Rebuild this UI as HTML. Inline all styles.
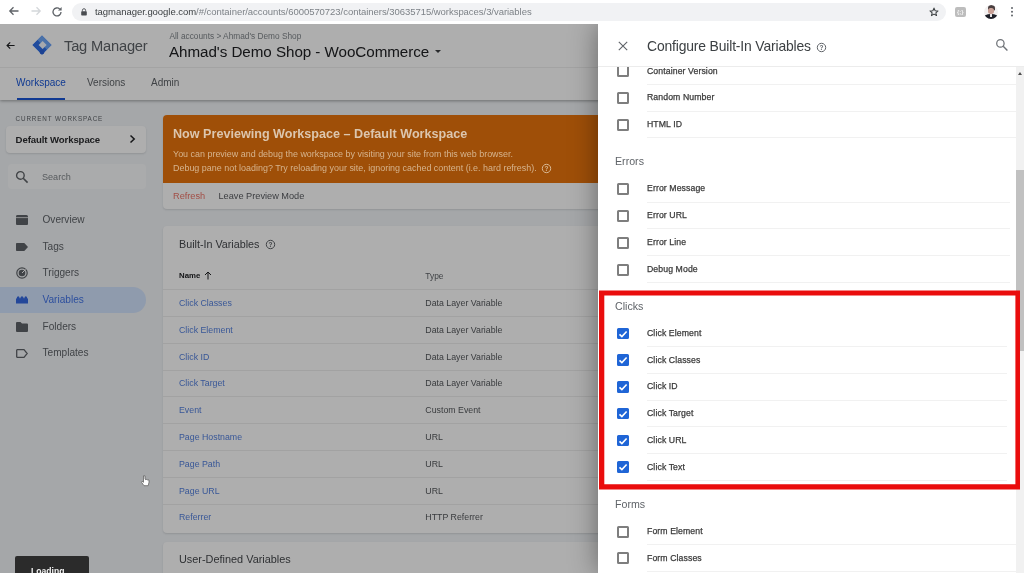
<!DOCTYPE html>
<html lang="en">
<head>
<meta charset="utf-8">
<title>Tag Manager</title>
<style>
*{box-sizing:border-box;margin:0;padding:0}
html,body{width:1024px;height:573px;overflow:hidden;background:#fff}
body{font-family:"Liberation Sans",sans-serif;position:relative;color:#202124}
.abs{position:absolute}
.t{position:absolute;white-space:nowrap;line-height:1;filter:blur(.4px)}
svg{filter:blur(.3px)}
/* browser chrome */
#chrome{position:absolute;left:0;top:0;width:1024px;height:24px;background:#fff;z-index:50}
#pill{position:absolute;left:72px;top:2.5px;width:874px;height:18px;border-radius:9px;background:#f1f2f4}
#url{left:95px;top:7.4px;font-size:9.5px;color:#7d8287;letter-spacing:-0.04px}
#url b{font-weight:normal;color:#3c4043}
/* app (dimmed) */
#app{position:absolute;left:0;top:24px;width:1024px;height:549px;background:#f2f5f8;overflow:hidden}
#hdr{position:absolute;left:0;top:0;width:1024px;height:75.5px;background:#fff;box-shadow:0 1px 3px rgba(0,0,0,.35)}
#dim{position:absolute;left:0;top:24px;width:598px;height:549px;background:rgba(0,0,0,.316);z-index:20}
.card{position:absolute;background:#fff;border-radius:4px;box-shadow:0 1px 2px rgba(60,64,67,.16)}
.nav{left:42.5px;font-size:10.1px;color:#5f6368}
.row{position:absolute;left:163px;width:500px;height:1px;background:#ededed}
.lnk{left:179px;font-size:8.8px;color:#5581de}
.typ{left:425.3px;font-size:8.8px;color:#55585c}
/* panel */
#panel{position:absolute;left:598px;top:24px;width:426px;height:549px;background:#fff;z-index:30;overflow:hidden}
#pshadow{position:absolute;left:598px;top:24px;width:426px;height:549px;box-shadow:0 0 26px rgba(0,0,0,.42);z-index:29}
.cb{position:absolute;left:19px;width:12px;height:12px;border:2px solid #7e7e7e;border-radius:1.5px;background:#fff;filter:blur(.3px)}
.cb.on{border-color:#1f65d6;background:#1f65d6;width:11.5px;height:11.5px}
.cb.on svg{position:absolute;left:-2px;top:-2px}
.lab{left:49px;font-size:8.7px;color:#3a3a3a;letter-spacing:.1px;-webkit-text-stroke:.25px #3a3a3a}
.sec{left:17px;font-size:10.65px;color:#5f6368}
.sep{position:absolute;left:49px;width:361px;height:1px;background:#f1f1f1}
#red{position:absolute;left:0;top:0;z-index:40;filter:none}
</style>
</head>
<body>

<!-- ===== Browser chrome ===== -->
<div id="chrome">
  <svg class="abs" style="left:8px;top:5px" width="12" height="12" viewBox="0 0 12 12"><path d="M10.5 6H2M5.5 2.2 1.8 6l3.7 3.8" fill="none" stroke="#5f6368" stroke-width="1.3"/></svg>
  <svg class="abs" style="left:30px;top:5px" width="12" height="12" viewBox="0 0 12 12"><path d="M1.5 6H10M6.5 2.2 10.2 6 6.5 9.8" fill="none" stroke="#d4d7da" stroke-width="1.3"/></svg>
  <svg class="abs" style="left:51px;top:5.5px" width="12" height="12" viewBox="0 0 12 12"><path d="M10 6a4 4 0 1 1-1.3-3" fill="none" stroke="#5f6368" stroke-width="1.3"/><path d="M10.6 1v3.6H7z" fill="#5f6368"/></svg>
  <div id="pill"></div>
  <svg class="abs" style="left:80.500px;top:8px" width="6" height="8" viewBox="0 0 6 8"><rect x="0.2" y="3.2" width="5.600" height="4.300" rx=".7" fill="#4a4d51"/><path d="M1.400 3.500V2.300a1.600 1.600 0 0 1 3.200 0V3.500" fill="none" stroke="#4a4d51" stroke-width=".9"/></svg>
  <div id="url" class="t"><b>tagmanager.google.com</b>/#/container/accounts/6000570723/containers/30635715/workspaces/3/variables</div>
  <svg class="abs" style="left:928.500px;top:7px" width="10" height="10" viewBox="0 0 13 12.500"><path d="M6.500 1.200 8 4.600l3.700.3-2.800 2.400.9 3.600L6.500 9 3.200 10.900l.9-3.600L1.300 4.900 5 4.600z" fill="none" stroke="#3c4043" stroke-width="1.400" stroke-linejoin="round"/></svg>
  <div class="abs" style="left:955px;top:7px;width:11px;height:10px;border-radius:2px;background:#bdbdbd"></div>
  <div class="t" style="left:957px;top:9px;font-size:6px;color:#f4f4f4;font-weight:bold">{;}</div>
  <div class="abs" style="left:984px;top:5px;width:14px;height:14px;border-radius:50%;background:#f3f1f1;overflow:hidden;filter:blur(.4px)">
    <div class="abs" style="left:3.500px;top:-.5px;width:7px;height:6px;border-radius:50% 50% 30% 30%;background:#4a3f40"></div>
    <div class="abs" style="left:4.300px;top:2.800px;width:5.400px;height:6.200px;border-radius:45%;background:#c9a197"></div>
    <div class="abs" style="left:-1px;top:8.600px;width:16px;height:9px;border-radius:50% 50% 0 0;background:#1d1f27"></div>
    <div class="abs" style="left:6.200px;top:8.600px;width:1.600px;height:3px;background:#e8e6e8"></div>
  </div>
  <div class="abs" style="left:1011px;top:6.900px;width:2px;height:2px;border-radius:50%;background:#5f6368;box-shadow:0 3.700px 0 #5f6368,0 7.400px 0 #5f6368"></div>
</div>

<!-- ===== Tag Manager app (behind overlay) ===== -->
<div id="app">
  <div id="hdr">
    <svg class="abs" style="left:6px;top:17px" width="9" height="9" viewBox="0 0 9 9"><path d="M8.600 4.500H1.400M4.200 1.400 1.100 4.500l3.100 3.100" fill="none" stroke="#202124" stroke-width="1.200"/></svg>
    <svg class="abs" style="left:32px;top:11px" width="20" height="20" viewBox="0 0 20 20">
      <path d="M10 .5 19.500 10 10 19.500 .5 10z" fill="#4d8ff8"/>
      <path d="M10 .5 19.500 10 15 14.500 5.500 5z" fill="#6da6f6"/>
      <path d="M5.500 5 .5 10 10 19.500 14.800 14.700 10 10z" fill="#2f6fe6"/>
      <circle cx="10" cy="17" r="2.400" fill="#2a62d8"/>
      <path d="M10.600 6 14.600 10 10.600 14 6.600 10z" fill="#f3f8ff"/>
    </svg>
    <div class="t" style="left:64px;top:14.5px;font-size:14.7px;color:#5f6368;letter-spacing:-.2px">Tag Manager</div>
    <div class="t" style="left:169.4px;top:8.3px;font-size:8.3px;color:#80868b">All accounts &gt; Ahmad's Demo Shop</div>
    <div class="t" style="left:169px;top:20px;font-size:15.2px;color:#202124;letter-spacing:-.05px">Ahmad's Demo Shop - WooCommerce</div>
    <div class="abs" style="left:435px;top:25.5px;width:0;height:0;border:3px solid transparent;border-top:3.5px solid #3c4043"></div>
    <div class="abs" style="left:0;top:43px;width:1024px;height:1px;background:#efefef"></div>
    <!-- tabs -->
    <div class="t" style="left:16px;top:54.4px;font-size:10px;color:#1a56d6">Workspace</div>
    <div class="t" style="left:87px;top:54.4px;font-size:10px;color:#5f6368">Versions</div>
    <div class="t" style="left:151px;top:54.4px;font-size:10px;color:#5f6368">Admin</div>
    <div class="abs" style="left:17px;top:73.5px;width:48px;height:2.2px;background:#1a56d6"></div>
  </div>

  <!-- sidebar -->
  <div class="t" style="left:15.6px;top:91.5px;font-size:6.3px;color:#5f6368;letter-spacing:.86px">CURRENT WORKSPACE</div>
  <div class="card" style="left:6px;top:102px;width:140px;height:27px;background:#fff"></div>
  <div class="t" style="left:15.6px;top:110.5px;font-size:9.6px;color:#2b2c2f;font-weight:bold;letter-spacing:-.1px">Default Workspace</div>
  <svg class="abs" style="left:129px;top:110px" width="7" height="10" viewBox="0 0 7 10"><path d="M1.5 1.5 5.2 5 1.5 8.5" fill="none" stroke="#202124" stroke-width="1.5"/></svg>
  <div class="abs" style="left:8px;top:140px;width:138px;height:25px;border-radius:4px;background:#fafbfc"></div>
  <svg class="abs" style="left:15px;top:146px" width="14" height="14" viewBox="0 0 14 14"><circle cx="5.4" cy="5.4" r="3.8" fill="none" stroke="#5f6368" stroke-width="1.4"/><path d="M8.2 8.2 12.6 12.6" stroke="#5f6368" stroke-width="1.6"/></svg>
  <div class="t" style="left:42px;top:148.500px;font-size:9.1px;color:#80868b">Search</div>

  <!-- nav icons -->
  <svg class="abs" style="left:16px;top:190.900px" width="12" height="10" viewBox="0 0 12 10"><path d="M0 1.5A1.5 1.5 0 0 1 1.5 0h9A1.5 1.5 0 0 1 12 1.500V9a1 1 0 0 1-1 1H1a1 1 0 0 1-1-1z" fill="#5f6368"/><path d="M0 2.600H12" stroke="#fff" stroke-width=".7"/></svg>
  <svg class="abs" style="left:16px;top:218.600px" width="12" height="8" viewBox="0 0 12 8"><path d="M.8 0H8.300L12 4 8.300 8H.8A.8.800 0 0 1 0 7.200V.8A.8.800 0 0 1 .8 0z" fill="#5f6368"/></svg>
  <svg class="abs" style="left:16px;top:242.700px" width="12" height="12" viewBox="0 0 12 12"><circle cx="6" cy="6" r="5.2" fill="none" stroke="#5f6368" stroke-width="1.2"/><circle cx="6" cy="6" r="3.300" fill="#5f6368"/><path d="M6 6 9.500 2.500" stroke="#fff" stroke-width="1"/></svg>
  <svg class="abs" style="left:16px;top:297.700px" width="12" height="10" viewBox="0 0 12 10"><path d="M0 1a1 1 0 0 1 1-1h3.500L6 1.500h5a1 1 0 0 1 1 1V9a1 1 0 0 1-1 1H1a1 1 0 0 1-1-1z" fill="#5f6368"/></svg>
  <svg class="abs" style="left:16px;top:324.900px" width="12" height="9" viewBox="0 0 12 9"><path d="M1.200.7H8L11.200 4.500 8 8.300H1.200a.5.500 0 0 1-.5-.5V1.200a.5.500 0 0 1 .5-.5z" fill="none" stroke="#5f6368" stroke-width="1.300"/></svg>
  <div class="t nav" style="top:190.8px">Overview</div>
  <div class="t nav" style="top:217.5px">Tags</div>
  <div class="t nav" style="top:244px">Triggers</div>
  <div class="t nav" style="top:297.700px">Folders</div>
  <div class="t nav" style="top:324.400px">Templates</div>

  <!-- preview banner -->
  <div class="card" style="left:163px;top:90.5px;width:520px;height:94.5px;overflow:hidden">
    <div class="abs" style="left:0;top:0;width:520px;height:68.5px;background:#ea750c"></div>
    <div class="t" style="left:10px;top:77.6px;font-size:9.2px;color:#ee7468">Refresh</div>
    <div class="t" style="left:55.5px;top:77.6px;font-size:9.2px;color:#585b60">Leave Preview Mode</div>
  </div>

  <!-- built-in variables card -->
  <div class="card" style="left:163px;top:202px;width:520px;height:307px"></div>
  <div class="t" style="left:179px;top:214.9px;font-size:10.75px;color:#45484c">Built-In Variables</div>
  <svg class="abs" style="left:265.0px;top:214.5px" width="11" height="11" viewBox="0 0 11 11"><circle cx="5.5" cy="5.5" r="4.2" fill="none" stroke="#5f6368" stroke-width="1"/><text x="5.5" y="7.8" font-size="6.5" font-weight="bold" text-anchor="middle" fill="#5f6368" font-family="Liberation Sans, sans-serif">?</text></svg>
  <div class="t" style="left:179px;top:248px;font-size:7.8px;color:#202124;font-weight:bold">Name</div>
  <svg class="abs" style="left:204px;top:247px" width="8" height="9" viewBox="0 0 8 9"><path d="M4 8.500V1.200M1 4 4 1l3 3" fill="none" stroke="#202124" stroke-width="1"/></svg>
  <div class="t" style="left:425.3px;top:248px;font-size:8.4px;color:#5f6368">Type</div>

  <div class="row" style="top:265px"></div>
  <div class="row" style="top:292px"></div>
  <div class="row" style="top:319px"></div>
  <div class="row" style="top:346px"></div>
  <div class="row" style="top:372px"></div>
  <div class="row" style="top:399px"></div>
  <div class="row" style="top:426px"></div>
  <div class="row" style="top:453px"></div>
  <div class="row" style="top:480px"></div>

  <div class="t lnk" style="top:275px">Click Classes</div><div class="t typ" style="top:275px">Data Layer Variable</div>
  <div class="t lnk" style="top:302px">Click Element</div><div class="t typ" style="top:302px">Data Layer Variable</div>
  <div class="t lnk" style="top:329px">Click ID</div><div class="t typ" style="top:329px">Data Layer Variable</div>
  <div class="t lnk" style="top:355px">Click Target</div><div class="t typ" style="top:355px">Data Layer Variable</div>
  <div class="t lnk" style="top:382px">Event</div><div class="t typ" style="top:382px">Custom Event</div>
  <div class="t lnk" style="top:409px">Page Hostname</div><div class="t typ" style="top:409px">URL</div>
  <div class="t lnk" style="top:436px">Page Path</div><div class="t typ" style="top:436px">URL</div>
  <div class="t lnk" style="top:463px">Page URL</div><div class="t typ" style="top:463px">URL</div>
  <div class="t lnk" style="top:489px">Referrer</div><div class="t typ" style="top:489px">HTTP Referrer</div>

  <!-- user-defined variables card -->
  <div class="card" style="left:163px;top:517.5px;width:520px;height:60px"></div>
  <div class="t" style="left:179px;top:530.4px;font-size:10.9px;color:#45484c">User-Defined Variables</div>
</div>

<div id="dim"></div>
<!-- banner text (drawn above the scrim) -->
<div class="abs" style="left:163px;top:114.5px;width:435px;height:70px;overflow:hidden;z-index:21">
  <div class="t" style="left:10px;top:13px;font-size:12.6px;font-weight:bold;color:#dcc6ae">Now Previewing Workspace – Default Workspace</div>
  <div class="t" style="left:10px;top:35px;font-size:8.95px;color:#d6b48e">You can preview and debug the workspace by visiting your site from this web browser.</div>
  <div class="t" style="left:10px;top:49px;font-size:8.95px;color:#d6b48e">Debug pane not loading? Try reloading your site, ignoring cached content (i.e. hard refresh).</div>
  <svg class="abs" style="left:377.7px;top:48.5px" width="11" height="11" viewBox="0 0 11 11"><circle cx="5.5" cy="5.5" r="4.2" fill="none" stroke="#d8b894" stroke-width="1"/><text x="5.5" y="7.8" font-size="6.5" font-weight="bold" text-anchor="middle" fill="#d8b894" font-family="Liberation Sans, sans-serif">?</text></svg>
</div>
<!-- active nav item (drawn above the scrim) -->
<div class="abs" style="left:0;top:286.5px;width:146px;height:26.5px;border-radius:0 13px 13px 0;background:#8f9bad;z-index:21"></div>
<svg class="abs" style="left:16px;top:296px;z-index:22" width="12" height="8" viewBox="0 0 12 8"><path d="M0 7.5V3.2C0 2.500 .3 2.200 .8 2.200 1 1 1.500 .3 2.200 .3S3.400 1 3.600 2.200h.8C4.600 1 5.200 .3 6 .3S7.400 1 7.600 2.200h.8C8.600 1 9.100 .3 9.800 .3S11 1 11.200 2.200C11.700 2.200 12 2.500 12 3.200V7.500z" fill="#23479a"/></svg>
<div class="t" style="left:42.5px;top:295px;font-size:10.1px;color:#2d4f9e;z-index:22">Variables</div>

<!-- loading toast + cursor -->
<div class="abs" style="left:15px;top:556px;width:74px;height:20px;background:#2b2b2b;border-radius:2px 2px 0 0;z-index:25"></div>
<div class="t" style="left:31px;top:566.500px;font-size:8.6px;color:#f2f2f2;z-index:26;font-weight:bold">Loading</div>
<svg class="abs" style="left:141px;top:475px;z-index:26" width="9" height="12" viewBox="0 0 9 12"><path d="M2.500 .8v6.500L1.200 6.300.5 7.200l2.500 3.500h4.200l.8-3.500V5.200l-1.200-.5-.5.300-.9-.6-.6.300-.8-.5V.8z" fill="#fff" stroke="#555" stroke-width=".7"/></svg>

<!-- ===== Right panel ===== -->
<div id="pshadow"></div>
<div id="panel">
  <div class="abs" style="left:0;top:0;width:426px;height:43px;background:#fff;border-bottom:1px solid #ececec;z-index:2"></div>
  <svg class="abs" style="left:20px;top:17px;z-index:3" width="10" height="10" viewBox="0 0 10 10"><path d="M.8 .8 9.200 9.200M9.200 .8 .8 9.200" stroke="#5f6368" stroke-width="1.100"/></svg>
  <div class="t" style="left:49px;top:16.2px;font-size:13.9px;color:#3c4043;z-index:3;letter-spacing:-.15px">Configure Built-In Variables</div>
  <svg class="abs" style="left:217.5px;top:17.9px;z-index:3" width="11" height="11" viewBox="0 0 11 11"><circle cx="5.5" cy="5.5" r="4.2" fill="none" stroke="#5f6368" stroke-width="1"/><text x="5.5" y="7.8" font-size="6.5" font-weight="bold" text-anchor="middle" fill="#5f6368" font-family="Liberation Sans, sans-serif">?</text></svg>
  <svg class="abs" style="left:397px;top:14px;z-index:3" width="14" height="14" viewBox="0 0 14 14"><circle cx="5.400" cy="5.400" r="3.700" fill="none" stroke="#6f7378" stroke-width="1.250"/><path d="M8.200 8.200 12.400 12.400" stroke="#6f7378" stroke-width="1.450"/></svg>

  <!-- general (tail) -->
  <div class="cb" style="top:41.4px"></div><div class="t lab" style="top:42.6px">Container Version</div><div class="sep" style="top:59.9px;width:369px"></div>
  <div class="cb" style="top:68.1px"></div><div class="t lab" style="top:69.3px">Random Number</div><div class="sep" style="top:86.6px;width:369px"></div>
  <div class="cb" style="top:94.8px"></div><div class="t lab" style="top:96.0px">HTML ID</div><div class="sep" style="top:113.3px;width:369px"></div>
  <div class="t sec" style="top:132.3px">Errors</div>
  <div class="cb" style="top:159.0px"></div><div class="t lab" style="top:160.2px">Error Message</div><div class="sep" style="top:177.5px;width:363px"></div>
  <div class="cb" style="top:185.9px"></div><div class="t lab" style="top:187.1px">Error URL</div><div class="sep" style="top:204.4px;width:363px"></div>
  <div class="cb" style="top:212.7px"></div><div class="t lab" style="top:213.9px">Error Line</div><div class="sep" style="top:231.2px;width:363px"></div>
  <div class="cb" style="top:239.5px"></div><div class="t lab" style="top:240.7px">Debug Mode</div><div class="sep" style="top:258.0px;width:363px"></div>
  <div class="t sec" style="top:277.4px">Clicks</div>
  <div class="cb on" style="top:303.5px"><svg width="12" height="12" viewBox="0 0 12 12"><path d="M2.5 6.3 4.9 8.6 9.6 3.5" fill="none" stroke="#fff" stroke-width="1.6"/></svg></div><div class="t lab" style="top:304.7px">Click Element</div><div class="sep" style="top:322.0px;width:360px"></div>
  <div class="cb on" style="top:330.3px"><svg width="12" height="12" viewBox="0 0 12 12"><path d="M2.5 6.3 4.9 8.6 9.6 3.5" fill="none" stroke="#fff" stroke-width="1.6"/></svg></div><div class="t lab" style="top:331.5px">Click Classes</div><div class="sep" style="top:348.8px;width:360px"></div>
  <div class="cb on" style="top:357.1px"><svg width="12" height="12" viewBox="0 0 12 12"><path d="M2.5 6.3 4.9 8.6 9.6 3.5" fill="none" stroke="#fff" stroke-width="1.6"/></svg></div><div class="t lab" style="top:358.3px">Click ID</div><div class="sep" style="top:375.6px;width:360px"></div>
  <div class="cb on" style="top:383.8px"><svg width="12" height="12" viewBox="0 0 12 12"><path d="M2.5 6.3 4.9 8.6 9.6 3.5" fill="none" stroke="#fff" stroke-width="1.6"/></svg></div><div class="t lab" style="top:385.0px">Click Target</div><div class="sep" style="top:402.3px;width:360px"></div>
  <div class="cb on" style="top:410.5px"><svg width="12" height="12" viewBox="0 0 12 12"><path d="M2.5 6.3 4.9 8.6 9.6 3.5" fill="none" stroke="#fff" stroke-width="1.6"/></svg></div><div class="t lab" style="top:411.7px">Click URL</div><div class="sep" style="top:429.0px;width:360px"></div>
  <div class="cb on" style="top:437.3px"><svg width="12" height="12" viewBox="0 0 12 12"><path d="M2.5 6.3 4.9 8.6 9.6 3.5" fill="none" stroke="#fff" stroke-width="1.6"/></svg></div><div class="t lab" style="top:438.5px">Click Text</div><div class="sep" style="top:455.8px;width:360px"></div>
  <div class="t sec" style="top:475.2px">Forms</div>
  <div class="cb" style="top:501.7px"></div><div class="t lab" style="top:502.9px">Form Element</div><div class="sep" style="top:520.2px;width:369px"></div>
  <div class="cb" style="top:528.4px"></div><div class="t lab" style="top:529.6px">Form Classes</div><div class="sep" style="top:546.9px;width:369px"></div>

  <!-- scrollbar -->
  <div class="abs" style="left:418px;top:43px;width:8px;height:506px;background:#f1f1f1"></div>
  <div class="abs" style="left:418px;top:146px;width:8px;height:181px;background:#c1c1c1"></div>
  <div class="abs" style="left:420px;top:48px;width:0;height:0;border:2.500px solid transparent;border-bottom:3px solid #505050;border-top:0"></div>
</div>

<svg id="red" width="1024" height="573" viewBox="0 0 1024 573"><path fill="#ea0d0d" fill-rule="evenodd" d="M599 290.400H1020V489.500H599zM604.300 295.600V484.300H1015.400V295.600z"/></svg>

</body>
</html>
